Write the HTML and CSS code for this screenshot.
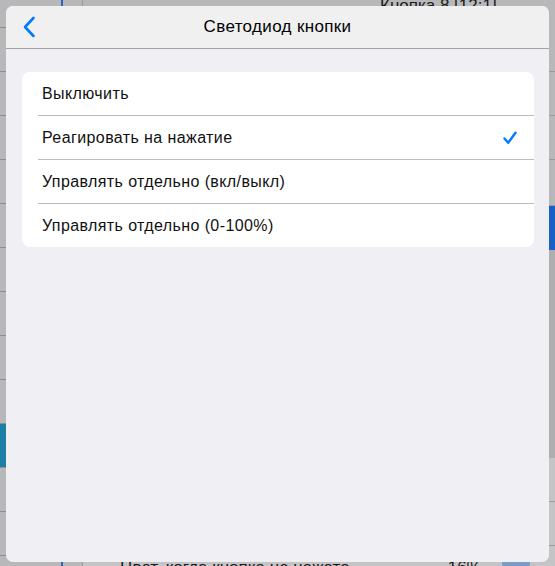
FILE: index.html
```html
<!DOCTYPE html>
<html lang="ru">
<head>
    <meta charset="UTF-8">
    <meta name="viewport" content="width=device-width, initial-scale=1.0">
    <title>Светодиод кнопки</title>
    <link rel="stylesheet" href="styles.css">
</head>
<body>
    <div class="screen">
        <div class="sidebar">
            <div class="side-head"></div>
            <div class="side-row"></div>
            <div class="side-row"></div>
            <div class="side-row"></div>
            <div class="side-row"></div>
            <div class="side-row"></div>
            <div class="side-row"></div>
            <div class="side-row"></div>
            <div class="side-row"></div>
            <div class="side-row"></div>
            <div class="side-row active"></div>
            <div class="side-row"></div>
            <div class="side-row"></div>
        </div>
        <div class="gutter"></div>
        <div class="detail">
            <div class="detail-head">Кнопка 8 [12:1]</div>
            <div class="detail-row"></div>
            <div class="detail-row"></div>
            <div class="detail-row"></div>
            <div class="detail-row tall"></div>
            <div class="detail-row seg-row"><span class="seg"></span></div>
            <div class="dark-block"></div>
            <div class="detail-row light"></div>
            <div class="detail-row light"></div>
            <div class="detail-row light">
                <span class="label">Цвет, когда кнопка не нажата</span>
                <span class="value">16%</span>
                <span class="swatch"></span>
            </div>
        </div>
    </div>

    <div class="popover">
        <div class="nav">
            <svg class="back" width="14" height="22" viewBox="0 0 14 22">
                <path d="M11.5 2 L3 11 L11.5 20" fill="none" stroke="#007aff" stroke-width="2.6" stroke-linecap="round" stroke-linejoin="round"/>
            </svg>
            <span class="nav-title">Светодиод кнопки</span>
        </div>
        <div class="content">
            <ul class="options">
                <li class="option">Выключить</li>
                <li class="option">Реагировать на нажатие
                    <svg class="check" width="14" height="14" viewBox="0 0 14 14">
                        <path d="M1.5 7.5 L5.2 11.8 L12.5 1.8" fill="none" stroke="#007aff" stroke-width="2.4" stroke-linecap="round" stroke-linejoin="round"/>
                    </svg>
                </li>
                <li class="option">Управлять отдельно (вкл/выкл)</li>
                <li class="option">Управлять отдельно (0-100%)</li>
            </ul>
        </div>
    </div>
</body>
</html>
```

FILE: styles.css
```css
body {
    margin: 0;
    font-family: "Liberation Sans", Arial, sans-serif;
    background-color: #b8b8bb;
    overflow: hidden;
}
.screen {
    display: flex;
    width: 555px;
    height: 566px;
    overflow: hidden;
    background-color: #b8b8bb;
}
.sidebar {
    width: 61px;
    border-right: 2px solid #2a62c4;
    flex-shrink: 0;
}
.side-head {
    height: 28px;
    border-bottom: 1px solid #8e8e90;
    box-sizing: border-box;
}
.side-row {
    height: 44px;
    border-bottom: 1px solid #8e8e90;
    box-sizing: border-box;
}
.side-row.active {
    background-color: #1d7ea6;
}
.gutter {
    width: 19px;
    border-right: 1px solid #9a9a9c;
    flex-shrink: 0;
}
.detail {
    flex: 1;
    min-width: 0;
}
.detail-head {
    height: 28px;
    padding-left: 297px;
    font-size: 17px;
    line-height: 12px;
    color: #1a1a1a;
    white-space: nowrap;
    box-sizing: border-box;
}
.detail-row {
    height: 44px;
    border-bottom: 1px solid #9a9a9c;
    box-sizing: border-box;
    display: flex;
    align-items: center;
}
.detail-row.tall {
    height: 46px;
}
.detail-row.seg-row {
    border-bottom: none;
}
.dark-block {
    height: 208px;
    background-color: #aeaeb1;
}
.detail-row.light {
    background-color: #c4c4c6;
}
.seg {
    margin-left: auto;
    width: 40px;
    height: 44px;
    background-color: #1760c4;
}
.label {
    padding-left: 37px;
    font-size: 17px;
    color: #1a1a1a;
    white-space: nowrap;
}
.value {
    padding-left: 98px;
    font-size: 17px;
    color: #1a1a1a;
}
.swatch {
    margin-left: auto;
    margin-right: 25px;
    width: 28px;
    height: 44px;
    background-color: #7a9cc6;
}

/* popover overlay */
.popover {
    position: absolute;
    left: 6px;
    top: 6px;
    width: 543px;
    height: 556px;
    border-radius: 7px;
    overflow: hidden;
    background-color: #efeff4;
    display: flex;
    flex-direction: column;
}
.nav {
    height: 42px;
    flex-shrink: 0;
    background-color: #f0f0f0;
    border-bottom: 1px solid #a3a3a6;
    display: flex;
    align-items: center;
    justify-content: center;
    position: relative;
}
.back {
    position: absolute;
    left: 16px;
    top: 10px;
}
.nav-title {
    font-size: 17px;
    letter-spacing: 0.35px;
    color: #000;
}
.content {
    padding: 23px 15px 0 16px;
}
.options {
    list-style: none;
    margin: 0;
    padding: 0;
    background-color: #fff;
    border-radius: 8px;
}
.option {
    height: 43px;
    margin-left: 16px;
    padding-left: 4px;
    padding-right: 17px;
    border-bottom: 1px solid #bcbcbf;
    display: flex;
    align-items: center;
    justify-content: space-between;
    font-size: 16px;
    letter-spacing: 0.4px;
    color: #111;
}
.option:last-child {
    border-bottom: none;
}
.check {
    flex-shrink: 0;
}
```
